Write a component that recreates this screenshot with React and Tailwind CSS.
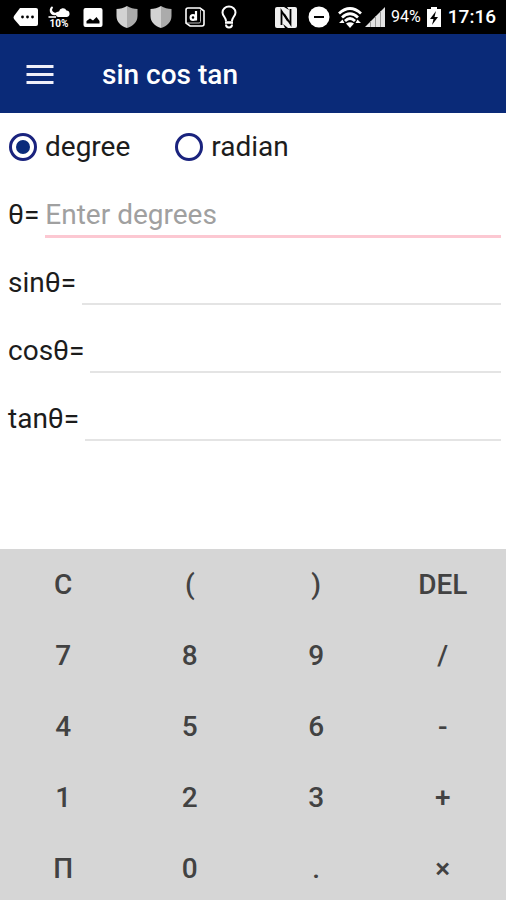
import React, { useState } from "react";
import clsx from "clsx";

const KEYS = [
  "C", "(", ")", "DEL",
  "7", "8", "9", "/",
  "4", "5", "6", "-",
  "1", "2", "3", "+",
  "Π", "0", ".", "×",
];

const Shield = () => (
  <svg viewBox="0 0 22 24" className="h-6 w-[22px]">
    <path d="M11 1C8 3 4 4 0.500 4V11C0.500 17 5 21 11 23Z" fill="#d2d2d2" />
    <path d="M11 1C14 3 18 4 21.500 4V11C21.500 17 17 21 11 23Z" fill="#ababab" />
  </svg>
);

const StatusBar = () => (
  <div className="flex h-[34px] items-center justify-between bg-black pr-[10px] pl-[13px] text-white">
    <div className="flex items-center">
      <svg viewBox="0 0 26 20" className="h-5 w-[26px]">
        <path d="M7 1H23Q25 1 25 3V17Q25 19 23 19H7L1 12Q0 10.500 1 9Z" fill="#fff" />
        <circle cx="9.500" cy="10" r="1.400" />
        <circle cx="14.500" cy="10" r="1.400" />
        <circle cx="19.500" cy="10" r="1.400" />
      </svg>
      <div className="ml-2 flex w-6 flex-col items-center">
        <svg viewBox="0 0 24 13" className="h-[13px] w-6">
          <path d="M5.500 1A4 4 0 1 0 11 6.500 3.600 3.600 0 0 1 5.500 1Z" fill="none" stroke="#fff" strokeWidth="1.800" />
          <path d="M1.500 11H9" stroke="#fff" strokeWidth="1.600" />
          <path d="M11.500 11A2.700 2.700 0 0 1 12 5.500 4 4 0 0 1 19.500 4.500 3.300 3.300 0 0 1 20 11Z" fill="#fff" />
        </svg>
        <span className="text-[10px] leading-[10px] font-bold">10%</span>
      </div>
      <svg viewBox="0 0 20 20" className="ml-3 h-5 w-5">
        <rect x="0.500" y="1" width="19" height="19" rx="2" fill="#fff" />
        <path d="M3.500 16.500V14L7 11.500 10 13.500 13.500 10 16.500 14V16.500Z" />
      </svg>
      <div className="ml-[13px] flex gap-3">
        <Shield />
        <Shield />
      </div>
      <svg viewBox="0 0 22 22" className="ml-3 h-[22px] w-[22px]" fill="none" stroke="#fff">
        <path d="M4 2H16L20 5V18Q20 20 18 20H6L2 17V4Q2 2 4 2Z" strokeWidth="1.600" />
        <path d="M16.500 4V15.500Q16.500 17 15 17H3" stroke="#bbb" />
        <circle cx="9" cy="11.500" r="2.400" strokeWidth="2.200" />
        <path d="M12 5V14.500" strokeWidth="2.200" />
      </svg>
      <svg viewBox="0 0 18 24" className="ml-[14px] h-6 w-[18px]" fill="none" stroke="#fff" strokeWidth="2">
        <path d="M6 16C6 12.500 2.500 11 2.500 7.500A6.500 6 0 0 1 15.500 7.500C15.500 11 12 12.500 12 16" />
        <path d="M5 17.500H13" strokeWidth="2.600" />
        <path d="M6 19.500C6 23.500 12 23.500 12 19.500" />
      </svg>
    </div>

    <div className="flex items-center">
      <svg viewBox="0 0 22 22" className="h-[22px] w-[22px]">
        <rect y="1" width="22" height="21" rx="2" fill="#f0f0f0" />
        <path d="M6.500 19V5L13 15" fill="none" stroke="#000" strokeWidth="1.800" />
        <path d="M15.500 3V18L9 8" fill="none" stroke="#000" strokeWidth="1.800" />
        <path d="M9 1H12L14 4ZM10 22H13L8 18Z" />
      </svg>
      <svg viewBox="0 0 22 22" className="ml-[11px] h-[22px] w-[22px]">
        <circle cx="11" cy="11" r="10.500" fill="#fff" />
        <path d="M6 11H16" stroke="#000" strokeWidth="2" />
      </svg>
      <svg viewBox="0 0 24 22" className="ml-2 h-[22px] w-6" fill="none" stroke="#fff" strokeWidth="2.800">
        <path d="M1 7.500Q12 -2.500 23 7.500" />
        <path d="M4 11.500Q12 4 20 11.500" />
        <path d="M7 15Q12 10 17 15" />
        <path d="M12 22L8 17.500Q12 15 16 17.500Z" fill="#fff" stroke="none" />
        <path d="M1 17L4.500 13.500 6.500 17ZM23 17L19.500 13.500 17.500 17Z" fill="#fff" stroke="none" />
      </svg>
      <svg viewBox="0 0 21 22" className="ml-[3px] h-[22px] w-[21px]">
        <path d="M0 21L20 1V21Z" fill="#e4e4e4" />
        <path d="M5.500 15V21M10.500 10V21M15.500 5V21" stroke="#999" />
      </svg>
      <span className="ml-[5px] text-base">94%</span>
      <svg viewBox="0 0 14 22" className="ml-[6px] h-[22px] w-[14px]">
        <path d="M4 1H10V3H14V21H0V3H4Z" fill="#fff" />
        <path d="M9 5L3 13H6.500L5 19 11 11H7.500Z" />
      </svg>
      <span className="ml-[7px] text-[19px] font-medium">17:16</span>
    </div>
  </div>
);

const UnitRadio = ({ value, unit, onChange }) => (
  <label className="flex items-center gap-2">
    <input
      type="radio"
      name="unit"
      value={value}
      checked={unit === value}
      onChange={() => onChange(value)}
      className="h-7 w-7 appearance-none rounded-full border-[3px] border-[#1a237e] bg-white checked:bg-[#0a2a7a] checked:bg-clip-content checked:p-1"
    />
    {value}
  </label>
);

const Field = ({ id, label, active, ...props }) => (
  <div className="flex h-[68px] items-center gap-[6px] pr-[5px] pl-2">
    <label htmlFor={id}>{label}</label>
    <input
      id={id}
      type="text"
      className={clsx(
        "min-w-0 flex-1 bg-transparent pt-[2px] outline-none placeholder:text-[#a0a0a0]",
        active ? "h-[46px] border-b-[3px] border-[#fcc8d2]" : "h-11 border-b-2 border-[#e4e4e4]"
      )}
      {...props}
    />
  </div>
);

const App = () => {
  const [unit, setUnit] = useState("degree");
  const [theta, setTheta] = useState("");

  const pressKey = (key) => {
    if (key === "C") setTheta("");
    else if (key === "DEL") setTheta(theta.slice(0, -1));
    else setTheta(theta + key);
  };

  const angle = (Number(theta) * (unit === "degree" ? Math.PI : 180)) / 180;
  const result = (fn) => (theta && !Number.isNaN(angle) ? String(fn(angle)) : "");

  return (
    <div className="flex min-h-screen flex-col bg-white font-[Roboto,sans-serif] text-[28px] text-[#1c1c1c]">
      <StatusBar />

      <header className="flex h-[79px] items-center gap-12 bg-[#0a2a78] px-[26px] pt-[2px] text-white">
        <button type="button" aria-label="Menu">
          <svg viewBox="0 0 28 22" className="h-[22px] w-7" stroke="#f0f0fa" strokeWidth="3">
            <path d="M0.500 2.500H27.500M0.500 10.500H27.500M0.500 18.500H27.500" />
          </svg>
        </button>
        <h1 className="font-medium">sin cos tan</h1>
      </header>

      <main className="flex-1">
        <div className="flex h-[68px] items-center gap-[45px] px-[9px]">
          <UnitRadio value="degree" unit={unit} onChange={setUnit} />
          <UnitRadio value="radian" unit={unit} onChange={setUnit} />
        </div>
        <Field
          id="theta"
          label="θ="
          active
          placeholder={unit === "degree" ? "Enter degrees" : "Enter radians"}
          value={theta}
          onChange={(e) => setTheta(e.target.value)}
        />
        <Field id="sin" label="sinθ=" readOnly value={result(Math.sin)} />
        <Field id="cos" label="cosθ=" readOnly value={result(Math.cos)} />
        <Field id="tan" label="tanθ=" readOnly value={result(Math.tan)} />
      </main>

      {/* Keypad */}
      <div className="grid grid-cols-4 gap-y-[9px] bg-[#d6d6d6] pt-[5px] font-medium text-[#424242]">
        {KEYS.map((key) => (
          <button key={key} type="button" onClick={() => pressKey(key)} className="h-[62px]">
            {key}
          </button>
        ))}
      </div>
    </div>
  );
};

export default App;
